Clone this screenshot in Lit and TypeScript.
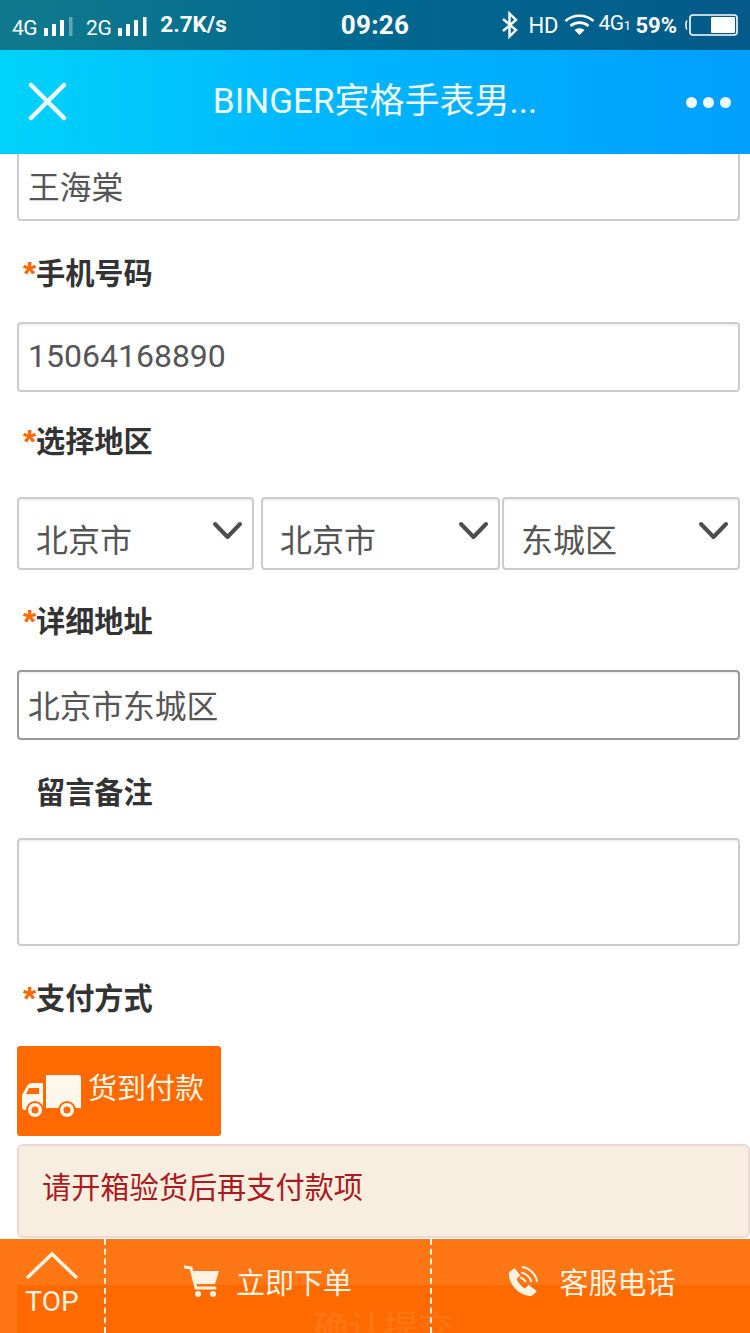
import { LitElement, html, css } from 'lit';
import { customElement } from 'lit/decorators.js';

const signal = (dim: boolean) => html`
  <svg class="signal" width="29" height="20" viewBox="0 0 29 20">
    <rect x="0" y="12" width="4" height="8" fill="#fff"></rect>
    <rect x="8" y="8" width="4" height="12" fill="#fff"></rect>
    <rect x="16" y="4" width="4" height="16" fill="#fff"></rect>
    <rect x="25" y="1" width="3.5" height="19" fill="#fff" opacity=${dim ? 0.35 : 1}></rect>
  </svg>
`;

const chevron = html`
  <svg class="chevron" width="32" height="20" viewBox="0 0 32 20">
    <path d="M3 3 L15.5 16 L28 3" fill="none" stroke="#4d4d4d" stroke-width="4" stroke-linecap="round" stroke-linejoin="round"></path>
  </svg>
`;

@customElement('app-root')
class AppRoot extends LitElement {
  static styles = css`
    :host {
      display: block;
      position: relative;
      width: 750px;
      height: 1333px;
      overflow: hidden;
      background: #fff;
      font-family: 'Noto Sans CJK SC', Roboto, sans-serif;
    }
    .status {
      height: 50px;
      display: grid;
      grid-template-columns: 1fr auto 1fr;
      align-items: center;
      padding: 0 12px;
      box-sizing: border-box;
      background: linear-gradient(90deg, #0f7a8e 0%, #01688f 50%, #045a8a 100%);
      color: #fff;
      font-family: Roboto, sans-serif;
    }
    .status-left,
    .status-right {
      display: flex;
      align-items: center;
    }
    .status-right {
      justify-content: flex-end;
    }
    .net {
      font-size: 21px;
      letter-spacing: -0.5px;
      margin-right: 7px;
      padding-top: 5px;
    }
    .signal {
      margin-right: 13px;
      margin-top: 2px;
    }
    .speed {
      font-size: 22.5px;
      font-weight: 700;
      margin-top: -2px;
    }
    .time {
      font-size: 26px;
      font-weight: 700;
      letter-spacing: 0.3px;
    }
    .hd {
      font-size: 22px;
      margin: 0 5px 0 9px;
    }
    .g4 {
      font-size: 21px;
      letter-spacing: -0.5px;
      margin: -5px 5px 0 3px;
    }
    .g4 small {
      font-size: 13px;
    }
    .percent {
      font-size: 22px;
      font-weight: 700;
      margin-right: 7px;
    }
    .header {
      height: 104px;
      display: grid;
      grid-template-columns: 96px 1fr 96px;
      align-items: center;
      background: linear-gradient(90deg, #00d3fb 0%, #00b8fd 40%, #009ffd 100%);
      color: #eefaff;
    }
    .close {
      display: block;
      margin-left: 28px;
    }
    .title {
      font-family: Roboto, 'Noto Sans CJK SC', sans-serif;
      font-size: 35px;
      line-height: 50px;
      text-align: center;
      white-space: nowrap;
    }
    .dots {
      display: flex;
      gap: 6px;
      justify-content: flex-end;
      padding-right: 19px;
    }
    .dots i {
      width: 11px;
      height: 11px;
      border-radius: 50%;
      background: #eefaff;
    }
    .form {
      padding: 0 10px 0 17px;
    }
    .box {
      box-sizing: border-box;
      width: 723px;
      height: 70px;
      padding: 0 9px 3px;
      display: flex;
      align-items: center;
      border: 2px solid #ccc;
      border-radius: 4px;
      box-shadow: inset 0 2px 2px rgba(0, 0, 0, 0.06);
      font-family: Roboto, 'Noto Sans CJK SC', sans-serif;
      font-size: 32px;
      color: #555;
    }
    .first {
      height: 67px;
      border-top: none;
      border-radius: 0 0 4px 4px;
      box-shadow: none;
      font-size: 31.7px;
    }
    .focus {
      border-color: #999;
      font-size: 31.7px;
    }
    .area {
      height: 108px;
    }
    .label {
      box-sizing: border-box;
      height: 42px;
      display: flex;
      align-items: center;
      padding: 0 0 4px 6px;
      font-size: 29.2px;
      font-weight: 700;
      color: #333;
    }
    .label b {
      width: 13px;
      color: #ff6a00;
      font-family: 'Liberation Sans', sans-serif;
      font-size: 34px;
      line-height: 34px;
      padding-top: 4px;
    }
    .label.plain {
      padding-left: 19px;
    }
    .l1 {
      margin: 31px 0 28px;
    }
    .l2 {
      margin: 28px 0 35px;
    }
    .l3 {
      margin: 30px 0 28px;
    }
    .l4 {
      margin: 31px 0 25px;
    }
    .l5 {
      margin: 31px 0 27px;
    }
    .selects {
      display: flex;
      gap: 7px;
    }
    .select {
      box-sizing: border-box;
      position: relative;
      height: 73px;
      padding: 15px 0 0 17px;
      border: 2px solid #ccc;
      border-radius: 4px;
      box-shadow: inset 0 2px 2px rgba(0, 0, 0, 0.06);
      font-size: 32px;
      line-height: 48px;
      color: #555;
    }
    .s1 {
      width: 237px;
    }
    .s2 {
      width: 239px;
    }
    .s3 {
      width: 238px;
      margin-left: -5px;
    }
    .chevron {
      position: absolute;
      right: 8px;
      top: 22px;
    }
    .pay {
      box-sizing: border-box;
      width: 204px;
      height: 90px;
      display: flex;
      align-items: center;
      gap: 7px;
      padding: 0 0 10px 4px;
      border-radius: 3px;
      background: #ff6a00;
      color: #fff2e6;
      font-size: 29px;
    }
    .truck {
      margin-top: 22px;
    }
    .alert {
      box-sizing: border-box;
      width: 733px;
      height: 94px;
      margin-top: 8px;
      padding: 0 0 13px 23px;
      display: flex;
      align-items: center;
      border: 2px solid #ecd9d6;
      border-radius: 6px;
      background: #f8eee0;
      color: #ab1a1e;
      font-size: 29.2px;
    }
    .submit {
      width: 733px;
      height: 60px;
      margin-top: 47px;
      background: #ff6a00;
      color: #fff;
      font-size: 35px;
      line-height: 82px;
      text-align: center;
    }
    .bar {
      position: absolute;
      left: 0;
      right: 0;
      bottom: 0;
      height: 94px;
      display: grid;
      grid-template-columns: 104px 326px 1fr;
      background: rgba(255, 106, 0, 0.92);
      color: #fff2e0;
      font-size: 29px;
    }
    .cell {
      display: flex;
      align-items: center;
      justify-content: center;
      gap: 16px;
      padding-bottom: 10px;
      box-sizing: border-box;
    }
    .cell + .cell {
      border-left: 2px dashed #fff2e0;
    }
    .phone {
      gap: 21px;
      padding-left: 2px;
    }
    .top {
      flex-direction: column;
      gap: 0;
      padding: 0;
      font-family: Roboto, sans-serif;
      font-size: 28px;
      line-height: 32px;
    }
    .top svg {
      display: block;
      margin-top: -4px;
      margin-bottom: 5px;
    }
  `;

  render() {
    return html`
      <div class="status">
        <div class="status-left">
          <span class="net">4G</span>${signal(true)}
          <span class="net">2G</span>${signal(false)}
          <span class="speed">2.7K/s</span>
        </div>
        <div class="time">09:26</div>
        <div class="status-right">
          <svg width="18" height="28" viewBox="0 0 18 28">
            <path d="M2 8 L15 19 L8.5 25.5 V2.5 L15 9 L2 20" fill="none" stroke="#fff" stroke-width="2.4"></path>
          </svg>
          <span class="hd">HD</span>
          <svg width="32" height="24" viewBox="0 0 32 24">
            <path d="M1.5 8 C9 1 22 1 29.5 8" fill="none" stroke="#fff" stroke-width="2.6"></path>
            <path d="M6.5 13 C11.5 8.5 19.5 8.5 24.5 13" fill="none" stroke="#fff" stroke-width="2.6"></path>
            <path d="M10.5 17 L15.5 22 L20.5 17 C17.5 14.5 13.5 14.5 10.5 17 Z" fill="#fff"></path>
          </svg>
          <span class="g4">4G<small>1</small></span>
          <span class="percent">59%</span>
          <svg width="54" height="22" viewBox="0 0 54 22">
            <path d="M3 6.5 C1.5 8 1.5 14 3 15.5" fill="none" stroke="#fff" stroke-width="1.5"></path>
            <rect x="6" y="1" width="47" height="20" rx="3" fill="none" stroke="#fff" stroke-width="1.6"></rect>
            <rect x="27" y="3" width="24" height="16" rx="1" fill="#fff"></rect>
          </svg>
        </div>
      </div>

      <div class="header">
        <svg class="close" width="40" height="40" viewBox="0 0 40 40">
          <path d="M3 3 L36 36 M36 3 L3 36" stroke="#eefaff" stroke-width="4.5" stroke-linecap="round"></path>
        </svg>
        <div class="title">BINGER宾格手表男...</div>
        <div class="dots"><i></i><i></i><i></i></div>
      </div>

      <div class="form">
        <div class="box first">王海棠</div>

        <div class="label l1"><b>*</b>手机号码</div>
        <div class="box">15064168890</div>

        <div class="label l2"><b>*</b>选择地区</div>
        <div class="selects">
          <div class="select s1">北京市${chevron}</div>
          <div class="select s2">北京市${chevron}</div>
          <div class="select s3">东城区${chevron}</div>
        </div>

        <div class="label l3"><b>*</b>详细地址</div>
        <div class="box focus">北京市东城区</div>

        <div class="label plain l4">留言备注</div>
        <div class="box area"></div>

        <div class="label l5"><b>*</b>支付方式</div>
        <div class="pay">
          <svg class="truck" width="60" height="44" viewBox="0 0 60 44">
            <path d="M25 0 H57 a3 3 0 0 1 3 3 V33 H25 Z" fill="#fff6ec"></path>
            <path d="M22 8 H12 C9 8 7 9 6 11 L1 20 V32 a3 3 0 0 0 3 3 H22 Z" fill="#fff6ec"></path>
            <path d="M8 13 H18 V19 H5 Z" fill="#ff6a00"></path>
            <circle cx="14" cy="35" r="8" fill="#fff6ec" stroke="#ff6a00" stroke-width="2"></circle>
            <circle cx="14" cy="35" r="3.5" fill="#ff6a00"></circle>
            <circle cx="46" cy="35" r="8" fill="#fff6ec" stroke="#ff6a00" stroke-width="2"></circle>
            <circle cx="46" cy="35" r="3.5" fill="#ff6a00"></circle>
          </svg>
          <span>货到付款</span>
        </div>
        <div class="alert">请开箱验货后再支付款项</div>
        <div class="submit">确认提交</div>
      </div>

      <div class="bar">
        <div class="cell top">
          <svg width="54" height="30" viewBox="0 0 54 30">
            <path d="M2 27 L27 3 L52 27" fill="none" stroke="#fff2e0" stroke-width="3.5"></path>
          </svg>
          TOP
        </div>
        <div class="cell">
          <svg width="36" height="34" viewBox="0 0 36 34">
            <path d="M1 3 L7 4 L12 24 H31" fill="none" stroke="#fff2e0" stroke-width="3" stroke-linecap="round"></path>
            <path d="M9 7 H35 L31 20 H12 Z" fill="#fff2e0"></path>
            <circle cx="14" cy="30" r="3" fill="#fff2e0"></circle>
            <circle cx="29" cy="30" r="3" fill="#fff2e0"></circle>
          </svg>
          <span>立即下单</span>
        </div>
        <div class="cell phone">
          <svg width="30" height="32" viewBox="0 0 32 34">
            <path d="M1 8 L7 3 L13 11 L9 15 C11 19 14 22 18 25 L22 21 L31 28 L25 33 C12 33 0 20 1 8 Z" fill="#fff2e0"></path>
            <path d="M15 2 C23 3 30 10 31 18 M14 8 C19 9 24 13 25 18 M13 13 C16 14 18 16 19 18" fill="none" stroke="#fff2e0" stroke-width="2.2"></path>
          </svg>
          <span>客服电话</span>
        </div>
      </div>
    `;
  }
}

declare global {
  interface HTMLElementTagNameMap {
    'app-root': AppRoot;
  }
}
